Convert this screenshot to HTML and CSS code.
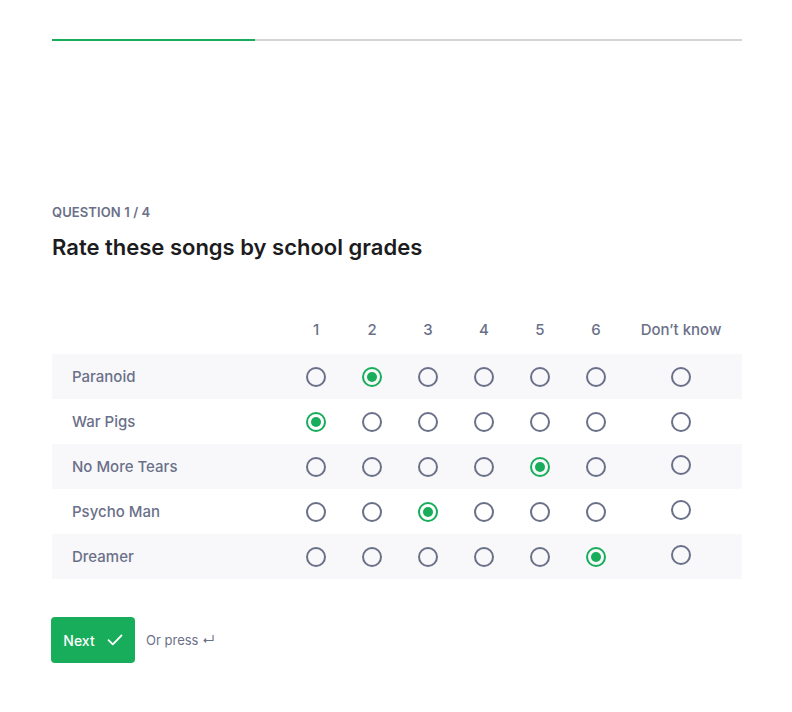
FILE: index.html
```html
<!DOCTYPE html>
<html>
<head>
<meta charset="utf-8">
<link rel="stylesheet" href="styles.css">
</head>
<body>
<div class="page">
  <div class="progress"><div class="progress-fill"></div></div>
  <div class="question">
    <div class="qlabel">QUESTION 1 / 4</div>
    <h1 class="title">Rate these songs by school grades</h1>
  </div>
  <div class="matrix">
    <div class="row head">
      <div class="label"></div>
      <div class="cell">1</div><div class="cell">2</div><div class="cell">3</div><div class="cell">4</div><div class="cell">5</div><div class="cell">6</div>
      <div class="cell dk">Don’t know</div>
    </div>
    <div class="row shade">
      <div class="label">Paranoid</div>
      <div class="cell"><span class="radio"></span></div><div class="cell"><span class="radio on"></span></div><div class="cell"><span class="radio"></span></div><div class="cell"><span class="radio"></span></div><div class="cell"><span class="radio"></span></div><div class="cell"><span class="radio"></span></div>
      <div class="cell dk"><span class="radio"></span></div>
    </div>
    <div class="row">
      <div class="label">War Pigs</div>
      <div class="cell"><span class="radio on"></span></div><div class="cell"><span class="radio"></span></div><div class="cell"><span class="radio"></span></div><div class="cell"><span class="radio"></span></div><div class="cell"><span class="radio"></span></div><div class="cell"><span class="radio"></span></div>
      <div class="cell dk"><span class="radio"></span></div>
    </div>
    <div class="row shade">
      <div class="label">No More Tears</div>
      <div class="cell"><span class="radio"></span></div><div class="cell"><span class="radio"></span></div><div class="cell"><span class="radio"></span></div><div class="cell"><span class="radio"></span></div><div class="cell"><span class="radio on"></span></div><div class="cell"><span class="radio"></span></div>
      <div class="cell dk"><span class="radio up"></span></div>
    </div>
    <div class="row">
      <div class="label">Psycho Man</div>
      <div class="cell"><span class="radio"></span></div><div class="cell"><span class="radio"></span></div><div class="cell"><span class="radio on"></span></div><div class="cell"><span class="radio"></span></div><div class="cell"><span class="radio"></span></div><div class="cell"><span class="radio"></span></div>
      <div class="cell dk"><span class="radio up"></span></div>
    </div>
    <div class="row shade">
      <div class="label">Dreamer</div>
      <div class="cell"><span class="radio"></span></div><div class="cell"><span class="radio"></span></div><div class="cell"><span class="radio"></span></div><div class="cell"><span class="radio"></span></div><div class="cell"><span class="radio"></span></div><div class="cell"><span class="radio on"></span></div>
      <div class="cell dk"><span class="radio up"></span></div>
    </div>
  </div>
  <div class="actions">
    <button class="next">Next
      <svg class="check" width="16" height="12" viewBox="0 0 16 12"><path d="M1.5 6.2 L5.8 10.3 L14.5 1.5" fill="none" stroke="#fff" stroke-width="1.8" stroke-linecap="round" stroke-linejoin="round"/></svg>
    </button>
    <span class="hint">Or press ↵</span>
  </div>
</div>
</body>
</html>
```
FILE: styles.css
```css
html, body {
  margin: 0;
  padding: 0;
  background: #fff;
}
body {
  font-family: "Inter", "Liberation Sans", sans-serif;
  color: #1c1c1e;
}
.page {
  width: 690px;
  padding: 39px 50px 0 52px;
}
.progress {
  height: 2px;
  background: #d4d4d8;
}
.progress-fill {
  width: 203px;
  height: 2px;
  background: #17ad5a;
}
.question {
  padding-top: 164px;
}
.qlabel {
  font-size: 13px;
  font-weight: 600;
  color: #6b7089;
  line-height: 14px;
  letter-spacing: 0.1px;
}
.title {
  margin: 15px 0 0 0;
  font-size: 22px;
  font-weight: 600;
  line-height: 26px;
  color: #1c1c1e;
}
.matrix {
  margin-top: 62px;
}
.row {
  display: grid;
  grid-template-columns: 236px repeat(6, 56px) 114px;
  align-items: center;
  height: 45px;
}
.row.head {
  height: 32px;
  align-items: start;
}
.row.shade {
  background: #f8f8fa;
}
.label {
  padding-left: 20px;
  font-size: 15px;
  font-weight: 500;
  color: #6b7089;
}
.cell {
  display: flex;
  justify-content: center;
  align-items: center;
  font-size: 15px;
  font-weight: 500;
  color: #6b7089;
}
.head .cell {
  line-height: 16px;
}
.radio {
  box-sizing: border-box;
  width: 20px;
  height: 20px;
  border: 2px solid #6b7089;
  border-radius: 50%;
  display: flex;
  justify-content: center;
  align-items: center;
}
.radio.on {
  border-color: #17ad5a;
}
.radio.on::after {
  content: "";
  width: 10px;
  height: 10px;
  border-radius: 50%;
  background: #17ad5a;
}
.radio.up {
  margin-top: -4px;
}
.actions {
  display: flex;
  align-items: center;
  margin-top: 38px;
  margin-left: -1px;
}
.next {
  box-sizing: border-box;
  width: 84px;
  height: 46px;
  border: none;
  border-radius: 4px;
  background: #17ad5a;
  color: #fff;
  font-family: "Inter", "Liberation Sans", sans-serif;
  font-size: 14px;
  font-weight: 500;
  display: flex;
  align-items: center;
  justify-content: center;
  gap: 12px;
  padding: 0;
}
.hint {
  margin-left: 11px;
  font-size: 13px;
  color: #6b7089;
}
```
